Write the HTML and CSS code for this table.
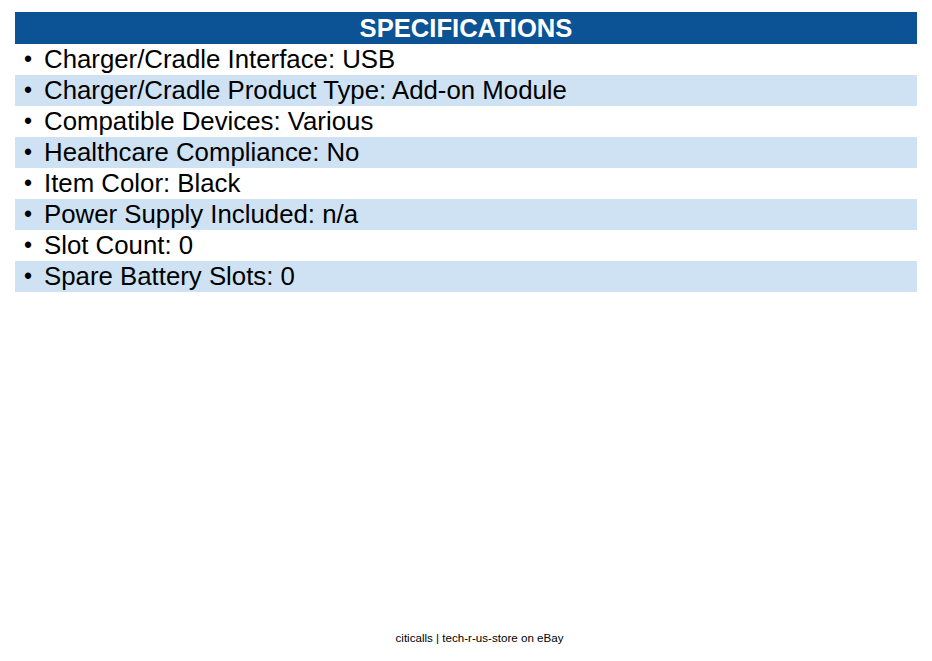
FILE: index.html
```html
<!DOCTYPE html>
<html>
<head>
<meta charset="utf-8">
<link rel="stylesheet" href="styles.css">
</head>
<body>
<div class="page">
  <div class="specs">
    <div class="specs-title">SPECIFICATIONS</div>
    <ul class="spec-list">
      <li class="spec-row">Charger/Cradle Interface: USB</li>
      <li class="spec-row alt">Charger/Cradle Product Type: Add-on Module</li>
      <li class="spec-row">Compatible Devices: Various</li>
      <li class="spec-row alt">Healthcare Compliance: No</li>
      <li class="spec-row">Item Color: Black</li>
      <li class="spec-row alt">Power Supply Included: n/a</li>
      <li class="spec-row">Slot Count: 0</li>
      <li class="spec-row alt">Spare Battery Slots: 0</li>
    </ul>
  </div>
  <div class="footer">citicalls | tech-r-us-store on eBay</div>
</div>
</body>
</html>
```

FILE: styles.css
```css
html, body {
  margin: 0;
  padding: 0;
  background: #ffffff;
}
body {
  font-family: "Liberation Sans", Arial, sans-serif;
  color: #000000;
}
.page {
  display: flex;
  flex-direction: column;
  height: 661px;
  box-sizing: border-box;
  padding: 12px 15px 16px 15px;
}
.specs-title {
  background: #0b5394;
  color: #ffffff;
  font-weight: bold;
  font-size: 25.6px;
  height: 32px;
  line-height: 32px;
  text-align: center;
}
.spec-list {
  list-style: none;
  margin: 0;
  padding: 0;
}
.spec-row {
  height: 31px;
  box-sizing: border-box;
  padding-bottom: 1px;
  line-height: 30px;
  font-size: 25.8px;
  padding-left: 29px;
  position: relative;
}
.spec-row::before {
  content: "•";
  position: absolute;
  left: 9px;
  font-size: 23px;
}
.spec-row.alt {
  background: #cfe2f3;
}
.footer {
  margin-top: auto;
  text-align: center;
  font-size: 11.6px;
  padding-left: 27px;
  line-height: 14px;
}
```
